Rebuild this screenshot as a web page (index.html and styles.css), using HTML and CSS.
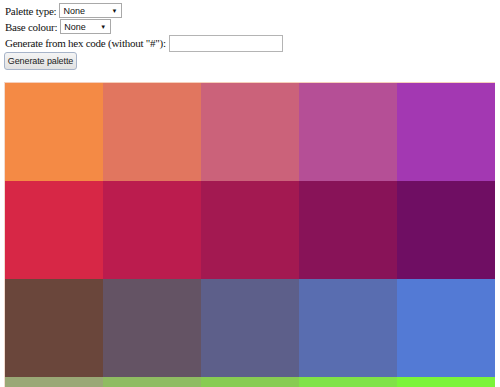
FILE: index.html
```html
<!DOCTYPE html>
<html lang="en">
<head>
    <meta charset="UTF-8">
    <link rel="stylesheet" href="styles.css">
</head>
<body>
    <div class="controls">
        <div class="row">
            <label>Palette type:</label>
            <div class="select wide">None<span class="arrow">▼</span></div>
        </div>
        <div class="row">
            <label>Base colour:</label>
            <div class="select">None<span class="arrow">▼</span></div>
        </div>
        <div class="row">
            <label>Generate from hex code (without "#"):</label>
            <div class="hex-input"></div>
        </div>
        <div class="row">
            <button class="generate-btn">Generate palette</button>
        </div>
    </div>

    <div class="palette">
        <div class="swatch" style="background: #F48A45"></div>
        <div class="swatch" style="background: #E1765F"></div>
        <div class="swatch" style="background: #CB627A"></div>
        <div class="swatch" style="background: #B54F96"></div>
        <div class="swatch" style="background: #A338B2"></div>

        <div class="swatch" style="background: #D72746"></div>
        <div class="swatch" style="background: #BB1C4E"></div>
        <div class="swatch" style="background: #A31951"></div>
        <div class="swatch" style="background: #881358"></div>
        <div class="swatch" style="background: #6F0E63"></div>

        <div class="swatch" style="background: #6A463B"></div>
        <div class="swatch" style="background: #645364"></div>
        <div class="swatch" style="background: #5D5F8A"></div>
        <div class="swatch" style="background: #596DB0"></div>
        <div class="swatch" style="background: #537AD5"></div>

        <div class="swatch" style="background: #9AA876"></div>
        <div class="swatch" style="background: #8FBC62"></div>
        <div class="swatch" style="background: #87CC52"></div>
        <div class="swatch" style="background: #80E248"></div>
        <div class="swatch" style="background: #7BF43A"></div>
    </div>
</body>
</html>
```

FILE: styles.css
```css
body {
    margin: 0;
    padding: 3px 4px 0;
    font-family: "Liberation Serif", "Times New Roman", serif;
    font-size: 11px;
    letter-spacing: -0.25px;
    color: #111;
    background: #fff;
}

.controls {
    display: flex;
    flex-direction: column;
    gap: 1px;
    padding-left: 1px;
}

.row {
    display: flex;
    align-items: center;
    gap: 3px;
    height: 15px;
}

.row:nth-child(3) {
    height: 16px;
}

.row:nth-child(4) {
    height: 18px;
}

.select {
    box-sizing: border-box;
    width: 51px;
    height: 15px;
    border: 1px solid #a9a9a9;
    font-family: "Liberation Sans", Arial, sans-serif;
    font-size: 9px;
    letter-spacing: 0;
    padding-left: 3px;
    display: flex;
    align-items: center;
    justify-content: space-between;
    background: #fff;
}

.select.wide {
    width: 63px;
}

.arrow {
    font-size: 6px;
    padding-right: 4px;
}

.hex-input {
    box-sizing: border-box;
    width: 114px;
    height: 17px;
    border: 1px solid #b4b4b4;
    background: #fff;
}

.generate-btn {
    box-sizing: border-box;
    height: 18px;
    width: 73px;
    padding: 0;
    margin-left: -1px;
    white-space: nowrap;
    font-family: "Liberation Sans", Arial, sans-serif;
    font-size: 9px;
    letter-spacing: -0.1px;
    color: #222;
    background: linear-gradient(#f4f4f4, #e2e2e2);
    border: 1px solid #a7b4c9;
    border-radius: 3px;
}

.palette {
    margin-top: 12px;
    display: grid;
    grid-template-columns: repeat(5, 98px);
    grid-auto-rows: 98px;
    border-left: 1px solid #f2dcd0;
    border-top: 1px solid #f6cfbb;
    width: 490px;
}
```
